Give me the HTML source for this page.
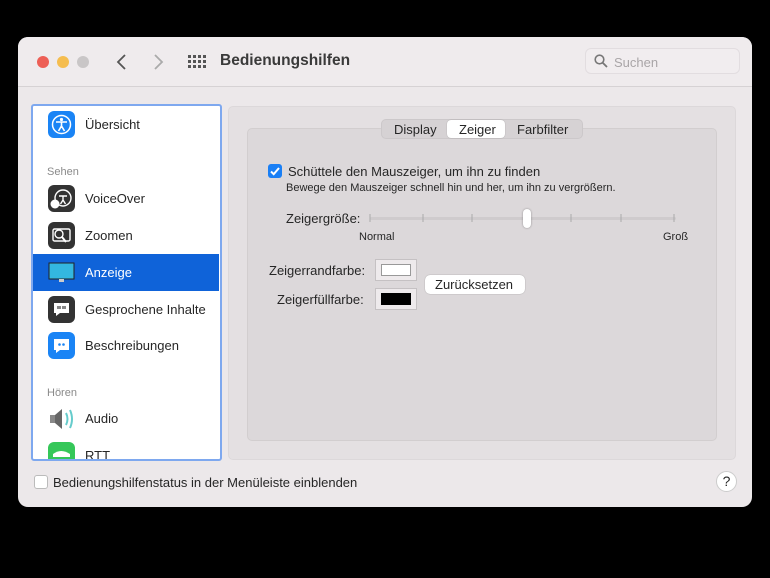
<!DOCTYPE html>
<html><head><meta charset="utf-8"><style>
*{margin:0;padding:0;box-sizing:border-box}
body{width:770px;height:578px;background:#000;font-family:"Liberation Sans",sans-serif;position:relative;overflow:hidden;color:#262626}
.win{position:absolute;left:18px;top:37px;width:734px;height:470px;background:#ece8ea;border-radius:10px;overflow:hidden}
.tb{position:absolute;left:0;top:0;width:734px;height:50px;background:#efebed;border-bottom:1px solid #d6d2d4}
.dot{position:absolute;top:19px;width:12px;height:12px;border-radius:50%}
.abs{position:absolute}
.side{position:absolute;left:13px;top:67px;width:191px;height:357px;background:#fff;border:2.5px solid #7ea8ef;border-radius:3px;overflow:hidden}
.item{position:absolute;left:0;width:186px;height:37px;font-size:13px;line-height:37px}
.item span{position:absolute;left:52px}
.ic{position:absolute;left:15px;top:5px;width:27px;height:27px;border-radius:6px}
.hdr{position:absolute;left:14px;font-size:11px;color:#8a8a8a}
.panel{position:absolute;left:210px;top:69px;width:508px;height:354px;background:#e4e0e2;border-radius:5px;border:1px solid #dcd8da}
.inner{position:absolute;left:229px;top:91px;width:470px;height:313px;background:#dcd8da;border-radius:5px;border:1px solid #d2cecf}
.t{position:absolute;font-size:13px;white-space:nowrap}
</style></head><body>
<div class="win">
 <div class="tb">
  <div class="dot" style="left:19px;background:#ed5f56"></div>
  <div class="dot" style="left:39px;background:#f5bd4f"></div>
  <div class="dot" style="left:59px;background:#c9c6c7"></div>
  <svg class="abs" style="left:98px;top:16px" width="12" height="18"><path d="M9 2L2 9L9 16" stroke="#555" stroke-width="1.8" fill="none"/></svg>
  <svg class="abs" style="left:134px;top:16px" width="12" height="18"><path d="M3 2L10 9L3 16" stroke="#aaa" stroke-width="1.8" fill="none"/></svg>
  <svg class="abs" style="left:170px;top:18px" width="18" height="14">
   <g fill="#555"><rect x="0" y="0" width="3" height="3"/><rect x="5" y="0" width="3" height="3"/><rect x="10" y="0" width="3" height="3"/><rect x="15" y="0" width="3" height="3"/>
   <rect x="0" y="5" width="3" height="3"/><rect x="5" y="5" width="3" height="3"/><rect x="10" y="5" width="3" height="3"/><rect x="15" y="5" width="3" height="3"/>
   <rect x="0" y="10" width="3" height="3"/><rect x="5" y="10" width="3" height="3"/><rect x="10" y="10" width="3" height="3"/><rect x="15" y="10" width="3" height="3"/></g></svg>
  <div class="t" style="left:202px;top:15px;font-size:15.5px;font-weight:bold;color:#3a3a3a">Bedienungshilfen</div>
  <div class="abs" style="left:567px;top:11px;width:155px;height:26px;border:1px solid #e2dde0;border-radius:6px;background:#f1edef"></div>
  <svg class="abs" style="left:576px;top:17px" width="14" height="14"><circle cx="5.5" cy="5.5" r="4.3" stroke="#777" stroke-width="1.6" fill="none"/><path d="M8.7 8.7L13 13" stroke="#777" stroke-width="1.8"/></svg>
  <div class="t" style="left:596px;top:18px;color:#a9a5a7">Suchen</div>
 </div>
 <div class="side">
  <div class="item" style="top:0px"><div class="ic" style="background:#1a84f5"><svg width="27" height="27"><circle cx="13.5" cy="13.5" r="9" stroke="#fff" stroke-width="1.5" fill="none"/><circle cx="13.5" cy="8.5" r="1.6" fill="#fff"/><path d="M8 11h11M13.5 11v4M13.5 15l-3 5M13.5 15l3 5" stroke="#fff" stroke-width="1.6" fill="none"/></svg></div><span>Übersicht</span></div>
  <div class="hdr" style="top:60px">Sehen</div>
  <div class="item" style="top:74px"><div class="ic" style="background:#333"><svg width="27" height="27"><circle cx="15" cy="13" r="8" stroke="#fff" stroke-width="1.4" fill="none"/><path d="M11 11h8M15 11v4l-2.5 4M15 15l2.5 4" stroke="#fff" stroke-width="1.4" fill="none"/><circle cx="7" cy="19" r="4.5" fill="#fff"/></svg></div><span>VoiceOver</span></div>
  <div class="item" style="top:111px"><div class="ic" style="background:#333"><svg width="27" height="27"><rect x="5" y="7" width="17" height="12" rx="1.5" stroke="#fff" stroke-width="1.4" fill="none"/><circle cx="11" cy="12" r="4" stroke="#fff" stroke-width="1.4" fill="#333"/><path d="M14 15l4 5" stroke="#fff" stroke-width="2"/></svg></div><span>Zoomen</span></div>
  <div class="item" style="top:148px;background:#0f63d9;color:#fff;height:37px"><div class="ic"><svg width="27" height="27"><rect x="1" y="4" width="25" height="16" fill="#33b7e0" stroke="#222" stroke-width="1"/><rect x="11" y="20" width="5" height="3" fill="#ccc"/></svg></div><span>Anzeige</span></div>
  <div class="item" style="top:185px"><div class="ic" style="background:#333"><svg width="27" height="27"><path d="M6 7h15v10h-9l-4 3v-3H6z" fill="#fff"/><rect x="9" y="10" width="4" height="3" fill="#888"/><rect x="14" y="10" width="4" height="3" fill="#888"/></svg></div><span>Gesprochene Inhalte</span></div>
  <div class="item" style="top:221px"><div class="ic" style="background:#1a84f5"><svg width="27" height="27"><path d="M6 7h15v11h-9l-4 3v-3H6z" fill="#fff"/><circle cx="11.5" cy="12.5" r="1.3" fill="#1a84f5"/><circle cx="15.5" cy="12.5" r="1.3" fill="#1a84f5"/></svg></div><span>Beschreibungen</span></div>
  <div class="hdr" style="top:281px">Hören</div>
  <div class="item" style="top:294px"><div class="ic"><svg width="27" height="27"><rect x="2" y="10" width="5" height="8" fill="#888"/><path d="M7 10l7-6v20l-7-6z" fill="#666"/><path d="M18 8q3 6 0 12M22 5q4 9 0 18" stroke="#6cc" stroke-width="2" fill="none"/></svg></div><span>Audio</span></div>
  <div class="item" style="top:331px"><div class="ic" style="background:#35c759"><svg width="27" height="27"><path d="M5 12q8-6 17 0v3H5z" fill="#fff"/></svg></div><span>RTT</span></div>
 </div>
 <div class="panel"></div>
 <div class="inner"></div>
 <div class="abs" style="left:363px;top:82px;width:202px;height:20px;background:#d6d2d4;border-radius:5px;border:1px solid #ccc8ca"></div>
 <div class="abs" style="left:429px;top:83px;width:58px;height:18px;background:#fff;border-radius:4px;box-shadow:0 0 1px rgba(0,0,0,.3)"></div>
 <div class="t" style="left:376px;top:85px">Display</div>
 <div class="t" style="left:441px;top:85px">Zeiger</div>
 <div class="t" style="left:499px;top:85px">Farbfilter</div>
 <div class="abs" style="left:250px;top:127px;width:14px;height:14px;background:#1a7ff5;border-radius:3px"><svg width="14" height="14"><path d="M3 7.5l2.7 2.7L11 4" stroke="#fff" stroke-width="2" fill="none"/></svg></div>
 <div class="t" style="left:270px;top:127px">Schüttele den Mauszeiger, um ihn zu finden</div>
 <div class="t" style="left:268px;top:145px;font-size:11px">Bewege den Mauszeiger schnell hin und her, um ihn zu vergrößern.</div>
 <div class="t" style="left:268px;top:174px">Zeigergröße:</div>
 <div class="abs" style="left:352px;top:180px;width:306px;height:3px;background:#cfcbcd;border-radius:2px"></div>
 <svg class="abs" style="left:350px;top:176px" width="312" height="10"><g stroke="#aaa" stroke-width="1"><path d="M2 1v8M55 1v8M104 1v8M203 1v8M253 1v8M306 1v8"/></g></svg>
 <div class="abs" style="left:505px;top:172px;width:8px;height:19px;background:#fff;border-radius:4px;box-shadow:0 0 2px rgba(0,0,0,.35)"></div>
 <div class="t" style="left:341px;top:194px;font-size:11px">Normal</div>
 <div class="t" style="left:645px;top:194px;font-size:11px">Groß</div>
 <div class="t" style="left:251px;top:226px">Zeigerrandfarbe:</div>
 <div class="t" style="left:259px;top:255px">Zeigerfüllfarbe:</div>
 <div class="abs" style="left:357px;top:222px;width:42px;height:22px;background:#eeeaec;border:1px solid #c5c1c3"><div style="margin:4px 5px;height:12px;background:#fff;border:1px solid #999"></div></div>
 <div class="abs" style="left:357px;top:251px;width:42px;height:22px;background:#eeeaec;border:1px solid #c5c1c3"><div style="margin:4px 5px;height:12px;background:#000"></div></div>
 <div class="abs" style="left:407px;top:238px;width:100px;height:19px;background:#fff;border-radius:5px;box-shadow:0 0 1px rgba(0,0,0,.4)"></div>
 <div class="t" style="left:417px;top:240px">Zurücksetzen</div>
 <div class="abs" style="left:16px;top:438px;width:14px;height:14px;background:#fff;border:1px solid #bbb;border-radius:3px"></div>
 <div class="t" style="left:35px;top:438px">Bedienungshilfenstatus in der Menüleiste einblenden</div>
 <div class="abs" style="left:698px;top:434px;width:21px;height:21px;background:#fff;border-radius:50%;border:1px solid #ccc;font-size:14px;text-align:center;line-height:19px">?</div>
</div>
</body></html>
